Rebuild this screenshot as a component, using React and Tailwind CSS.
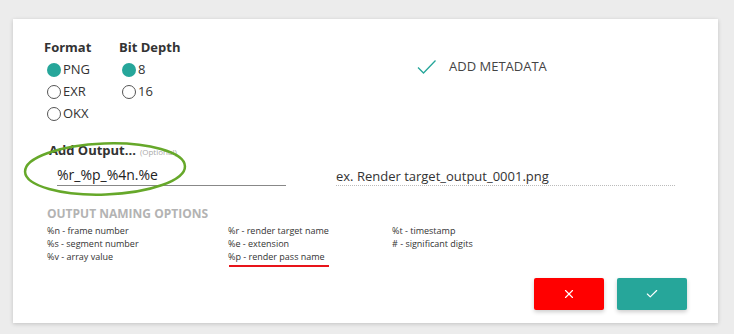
import { Check, X } from 'lucide-react';

const Radio = ({ checked, label }) => (
  <div className="flex items-center h-[22px]">
    {checked ? (
      <span className="w-[14px] h-[14px] rounded-full bg-[#26a69a]" />
    ) : (
      <span className="w-[14px] h-[14px] rounded-full border border-[#555] bg-white" />
    )}
    <span className="ml-[2px] text-[13px] text-[#333]">{label}</span>
  </div>
);

const options = [
  ['%n - frame number', '%r - render target name', '%t - timestamp'],
  ['%s - segment number', '%e - extension', '# - significant digits'],
  ['%v - array value', '%p - render pass name', ''],
];

export default function App() {
  return (
    <div className="w-[734px] h-[334px] bg-[#ececec] pt-[19px] pl-[13px]" style={{ fontFamily: '"Open Sans", sans-serif' }}>
      <div className="relative w-[705px] h-[304px] bg-white shadow-[0_1px_4px_rgba(0,0,0,0.18)] pl-[34px] pt-[20px]">
        {/* Top row */}
        <div className="flex">
          <div className="w-[72px]">
            <div className="-ml-[3px] text-[13px] font-bold text-[#333] leading-[16px]">Format</div>
            <div className="mt-[4px]">
              <Radio checked label="PNG" />
              <Radio label="EXR" />
              <Radio label="OKX" />
            </div>
          </div>
          <div className="w-[243px]">
            <div className="text-[13px] font-bold text-[#333] leading-[16px]">Bit Depth</div>
            <div className="mt-[4px] pl-[3px]">
              <Radio checked label="8" />
              <Radio label="16" />
            </div>
          </div>
          <div className="flex items-center h-[16px] mt-[20px] ml-[55px]">
            <svg width="20" height="16" viewBox="0 0 20 16" fill="none" stroke="#26a69a" strokeWidth="1.3">
              <path d="M1 8.5 L6.5 14 L18.5 1.5" />
            </svg>
            <span className="ml-[12px] text-[13px] text-[#444]">ADD METADATA</span>
          </div>
        </div>

        {/* Output name */}
        <div className="flex items-start mt-[16px]">
          <div className="relative w-[252px] pl-[2px]">
            <div className="flex items-baseline">
              <span className="text-[13px] font-bold text-[#333]">Add Output...</span>
              <span className="ml-[4px] text-[8px] text-[#aaa]">(Optional)</span>
            </div>
            <div className="ml-[8px] w-[229px] mt-[5px] border-b border-[#888] pb-[1px] text-[14px] text-[#222] leading-[18px]">
              %r_%p_%4n.%e
            </div>
            <svg className="absolute left-[-24px] top-[-1px]" width="166" height="58" viewBox="0 0 166 58" fill="none">
              <ellipse cx="82" cy="29" rx="80" ry="25.5" stroke="#66a82a" strokeWidth="2.5" transform="rotate(-2 82 29)" />
            </svg>
          </div>
          <div className="ml-[37px] w-[339px] mt-[26px] border-b border-dotted border-[#bbb] text-[13px] text-[#333] leading-[18px]">
            ex. Render target_output_0001.png
          </div>
        </div>

        {/* Naming options */}
        <div className="mt-[21px]">
          <div className="text-[12px] font-bold text-[#b3b3b3] leading-[14px]">OUTPUT NAMING OPTIONS</div>
          <div className="mt-[3px]">
            {options.map((row, i) => (
              <div key={i} className="flex text-[9px] text-[#333] leading-[13px]">
                <span className="w-[181px]">{row[0]}</span>
                <span className="w-[164px] relative">
                  {row[1]}
                  {i === 2 && (
                    <span className="absolute left-[1px] top-[15px] w-[100px] h-[2px] bg-[#e8141a]" />
                  )}
                </span>
                <span>{row[2]}</span>
              </div>
            ))}
          </div>
        </div>

        {/* Buttons */}
        <div className="absolute right-[31px] bottom-[13px] flex gap-[13px]">
          <button className="w-[70px] h-[32px] rounded-[2px] bg-[#ff0000] flex items-center justify-center shadow-[0_2px_4px_rgba(0,0,0,0.2)]">
            <X size={14} color="white" strokeWidth={2} />
          </button>
          <button className="w-[70px] h-[32px] rounded-[2px] bg-[#26a69a] flex items-center justify-center shadow-[0_2px_4px_rgba(0,0,0,0.2)]">
            <Check size={14} color="white" strokeWidth={2} />
          </button>
        </div>
      </div>
    </div>
  );
}
